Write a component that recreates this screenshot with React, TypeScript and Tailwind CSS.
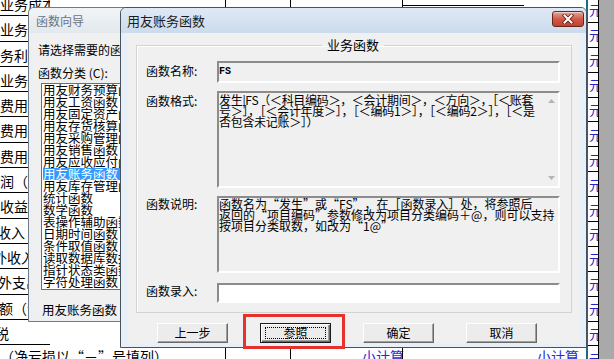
import React from "react";

const leftRows: { t: string; c: string }[] = [
  { t: "业务成本", c: "pt-[6px]" },
  { t: "业务税金及附加", c: "pt-[6px]" },
  { t: "务利润", c: "pt-[6px]" },
  { t: "业务支出", c: "pt-[6px]" },
  { t: "费用", c: "pt-[6px]" },
  { t: "费用", c: "pt-[6px]" },
  { t: "费用", c: "pt-[6px]" },
  { t: "润（亏损", c: "pt-[6px]" },
  { t: "收益", c: "pt-[6px]" },
  { t: "收入", c: "pt-[6px] -ml-[3px]" },
  { t: "外收入", c: "pt-[6px] -ml-[7px]" },
  { t: "外支出", c: "pt-[6px] -ml-[2px]" },
  { t: "额（亏损", c: "pt-[6px] -ml-[1px]" },
  { t: "税", c: "pt-[6px] -ml-[5px]" },
  { t: "（净亏损以“－”号填列）", c: "pt-[4px]" },
];

const cats = [
  "用友财务预算函数",
  "用友工资函数",
  "用友固定资产函数",
  "用友存货核算函数",
  "用友采购管理函数",
  "用友销售函数",
  "用友应收应付函数",
  "用友账务函数",
  "用友库存管理函数",
  "统计函数",
  "数学函数",
  "表操作辅助函数",
  "日期时间函数",
  "条件取值函数",
  "读取数据库数据函数",
  "指针状态类函数",
  "字符处理函数",
];

const yuan = Array.from({ length: 16 });

function Btn({ label, def }: { label: string; def?: boolean }) {
  if (def) {
    return (
      <div className="relative w-[71px] h-[20px] shrink-0 border border-[#1a1a1a] bg-[#ececec] shadow-[inset_1px_1px_0_#ffffff,inset_-1px_-1px_0_#696969,inset_-2px_-2px_0_#a0a0a0] flex items-center justify-center text-[12px] leading-[14px] text-black">
        <span className="absolute inset-x-[4px] inset-y-[3px] border border-dotted border-black"></span>
        {label}
      </div>
    );
  }
  return (
    <div className="w-[71px] h-[20px] shrink-0 border border-t-white border-l-white border-r-[#696969] border-b-[#696969] bg-[#ececec] shadow-[inset_-1px_-1px_0_#a0a0a0] flex items-center justify-center text-[12px] leading-[14px] text-black">
      {label}
    </div>
  );
}

function LQ() {
  return <span className="inline-block w-[12px] text-right">“</span>;
}
function RQ() {
  return <span className="inline-block w-[12px] text-left">”</span>;
}

const sunken =
  "border-2 border-t-[#8c8c8c] border-l-[#8c8c8c] border-r-[#ffffff] border-b-[#ffffff]";

export default function App() {
  return (
    <div className="relative w-[614px] h-[359px] overflow-hidden bg-white font-['Noto_Sans_CJK_SC','Noto_Sans',sans-serif] text-black">
      {/* spreadsheet background */}
      <div className="flex w-[614px] h-full">
        <div className="w-[50px] shrink-0 -mt-[9px] flex flex-col text-[14px]">
          {leftRows.map((r, i) => (
            <div
              key={i}
              className={
                "h-[25.3px] shrink-0 border-b border-black whitespace-nowrap leading-[14px] " +
                (i === leftRows.length - 1 ? "overflow-visible " : "overflow-hidden ") +
                r.c
              }
            >
              {r.t}
            </div>
          ))}
        </div>
        <div className="w-[175px] shrink-0"></div>
        <div className="w-[65px] shrink-0 border-l border-black"></div>
        <div className="w-[112px] shrink-0 border-l border-black flex flex-col justify-end">
          <div className="h-[10px] pl-[71px] text-[14px] leading-[14px] text-[#2a2ad4] whitespace-nowrap overflow-visible">
            小计算
          </div>
        </div>
        <div className="w-[186px] shrink-0 border-l border-black border-r-2 border-r-[#1d6b82] flex flex-col">
          <div className="w-[121px] h-[6px] border-b border-black"></div>
          <div className="flex-1"></div>
          <div className="h-[10px] pl-[134px] text-[14px] leading-[14px] text-[#2a2ad4] whitespace-nowrap overflow-hidden">
            小计算
          </div>
        </div>
        <div className="w-[11px] shrink-0 border-r border-black overflow-hidden flex flex-col -mt-[2px]">
          {yuan.map((_, i) => (
            <div
              key={i}
              className="h-[24.9px] shrink-0 border-b border-black flex items-center text-[13px] leading-[13px] text-[#2424c8] whitespace-nowrap overflow-hidden pl-[1px]"
            >
              元
            </div>
          ))}
        </div>
        <div className="w-[15px] shrink-0 bg-[#a9a9a9]"></div>
      </div>

      {/* dialog 1: 函数向导 (inactive) */}
      <div className="absolute left-[28px] top-[7px] w-[300px] h-[315px] flex flex-col border border-[#6f7a86] rounded-t-[6px] bg-[#eceff3]">
        <div className="h-[25px] shrink-0 flex items-center pl-[7px] bg-gradient-to-b from-[#f1f4f7] to-[#e3e8ee] rounded-t-[5px]">
          <span className="text-[12px] leading-[14px] text-[#6a7480]">函数向导</span>
        </div>
        <div className="flex-1 mx-[4px] mb-[4px] bg-[#f0f0f0] flex flex-col pl-[5px]">
          <div className="mt-[10px] text-[12px] leading-[14px] whitespace-nowrap">请选择需要的函数：</div>
          <div className="mt-[9px] text-[12px] leading-[14px] whitespace-nowrap">函数分类 (C):</div>
          <div className="mt-[3px] ml-[3px] w-[250px] h-[207px] border border-[#6e6e6e] bg-white pl-[1px] flex flex-col">
            {cats.map((c, i) => (
              <div
                key={i}
                className={
                  "h-[12px] shrink-0 text-[12.5px] leading-[12px] whitespace-nowrap " +
                  (i === 7 ? "bg-[#3399ff] text-white" : "text-black")
                }
              >
                {c}
              </div>
            ))}
          </div>
          <div className="mt-[13px] ml-[4px] text-[12.5px] leading-[14px] whitespace-nowrap">用友账务函数</div>
        </div>
      </div>

      {/* dialog 2: 用友账务函数 (active) */}
      <div className="absolute left-[120px] top-[7px] w-[467px] h-[341px] flex flex-col border border-[#45525f] rounded-t-[6px] bg-[#e9eff6]">
        <div className="relative h-[25px] shrink-0 flex items-center pl-[6px] bg-gradient-to-b from-[#e0e9f4] to-[#cbdbec] rounded-t-[5px]">
          <span className="text-[13px] leading-[14px] text-[#1b1b1b]">用友账务函数</span>
          <div className="absolute right-[2px] top-[3px] w-[32px] h-[16px] rounded-[3px] border border-[#6b2418] bg-gradient-to-b from-[#e6a396] via-[#cf5a48] to-[#c2412f] shadow-[inset_0_1px_0_rgba(255,255,255,0.5)] flex items-center justify-center">
            <svg width="12" height="10" viewBox="0 0 12 10">
              <path d="M2.5 1.5 L9.5 8.5 M9.5 1.5 L2.5 8.5" stroke="#5a1c12" strokeWidth="3.6" strokeLinecap="square" />
              <path d="M2.5 1.5 L9.5 8.5 M9.5 1.5 L2.5 8.5" stroke="#ffffff" strokeWidth="2" strokeLinecap="square" />
            </svg>
          </div>
        </div>
        <div className="flex-1 mx-[6px] mb-[5px] bg-[#f0f0f0] flex flex-col pt-[5px]">
          <fieldset className="ml-[9px] mr-[8px] border border-[#d3d3d3] shadow-[inset_1px_1px_0_#ffffff] pl-[9px] pr-[11px] pt-[9px] pb-[9px] flex flex-col">
            <legend className="mx-auto px-[5px] text-[13px] leading-[14px]">业务函数</legend>
            {/* name */}
            <div className="flex items-start h-[22px]">
              <div className="w-[71px] shrink-0 pt-[3px] text-[12px] leading-[14px]">函数名称:</div>
              <div className={"w-[343px] h-[22px] bg-[#f0f0f0] pt-[2px] text-[10px] leading-[10px] " + sunken}>
                <span className="font-['Liberation_Mono',monospace] font-bold">FS</span>
              </div>
            </div>
            {/* format */}
            <div className="flex items-start mt-[8px]">
              <div className="w-[71px] shrink-0 pt-[3px] text-[12px] leading-[14px]">函数格式:</div>
              <div className={"w-[343px] h-[97px] bg-[#f0f0f0] flex " + sunken}>
                <div className="flex-1 pt-[1px] text-[12px] leading-[11px] tracking-[-0.3px] whitespace-nowrap overflow-hidden">
                  <div>发生|FS（＜科目编码＞，＜会计期间＞，＜方向＞，［＜账套</div>
                  <div>号＞］，［＜会计年度＞］，［＜编码1＞］，［＜编码2＞］，［＜是</div>
                  <div>否包含未记账＞］）</div>
                </div>
                <div className="w-[14px] shrink-0 flex flex-col justify-between">
                  <div className="h-[16px] flex items-center justify-center">
                    <svg width="7" height="4" viewBox="0 0 7 4">
                      <path d="M0 4 L3.5 0 L7 4 Z" fill="#b4b4b4" />
                    </svg>
                  </div>
                  <div className="h-[16px] flex items-center justify-center">
                    <svg width="7" height="4" viewBox="0 0 7 4">
                      <path d="M0 0 L3.5 4 L7 0 Z" fill="#b4b4b4" />
                    </svg>
                  </div>
                </div>
              </div>
            </div>
            {/* description */}
            <div className="flex items-start mt-[8px]">
              <div className="w-[71px] shrink-0 pt-[1px] text-[12px] leading-[14px]">函数说明:</div>
              <div className={"w-[343px] h-[77px] bg-[#f0f0f0] text-[12px] leading-[11px] whitespace-nowrap overflow-hidden " + sunken}>
                <div>
                  函数名为<LQ />发生<RQ />或<LQ />FS<RQ />，在［函数录入］处，将参照后
                </div>
                <div>
                  返回的<LQ />项目编码<RQ />参数修改为项目分类编码＋@，则可以支持
                </div>
                <div>
                  按项目分类取数，如改为<LQ />1@<RQ />
                </div>
              </div>
            </div>
            {/* input */}
            <div className="flex items-start mt-[10px]">
              <div className="w-[71px] shrink-0 pt-[1px] text-[12px] leading-[14px]">函数录入:</div>
              <div className={"w-[343px] h-[20px] bg-white " + sunken}></div>
            </div>
          </fieldset>
          <div className="mt-[10px] pl-[30px] flex gap-[32px]">
            <Btn label="上一步" />
            <Btn label="参照" def />
            <Btn label="确定" />
            <Btn label="取消" />
          </div>
        </div>
      </div>

      {/* red annotation box */}
      <div className="absolute left-[243px] top-[314px] w-[102px] h-[35px] border-[3px] border-[#e5322c]"></div>
    </div>
  );
}
